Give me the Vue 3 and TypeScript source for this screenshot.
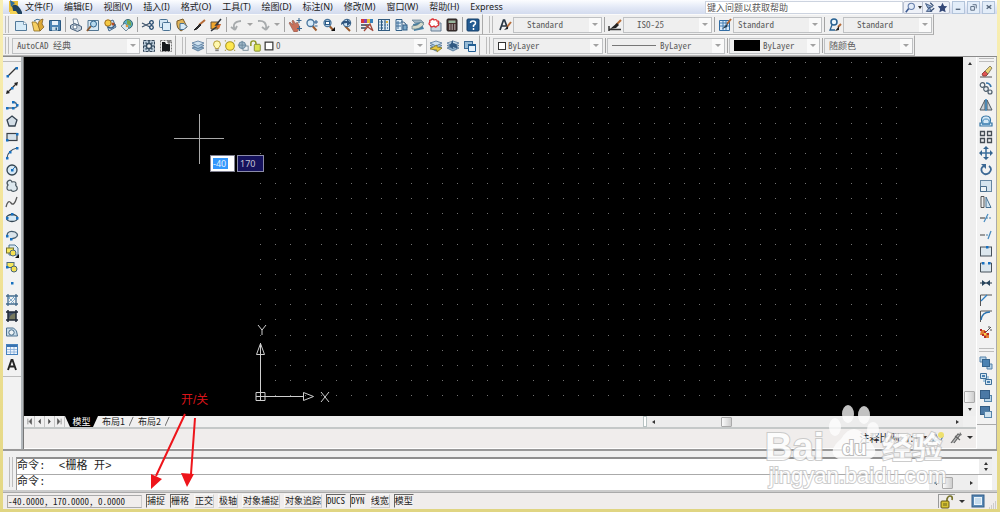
<script setup lang="ts">
import { ref } from 'vue'

type Item =
  | { kind: 'icon'; name: string; label: string }
  | { kind: 'sep' }
  | { kind: 'drop'; label: string }
  | { kind: 'combo'; size: string; text: string; label: string; prefix?: string; indent?: boolean }

const icon = (name: string, label: string): Item => ({ kind: 'icon', name, label })
const sep: Item = { kind: 'sep' }
const drop = (label: string): Item => ({ kind: 'drop', label })

const lens = '<path d="M7.500 8l4 4.500" stroke="#9a5a2c" stroke-width="2"/><circle cx="5.500" cy="5" r="3.500" fill="#d8ecfa" stroke="#47739b" stroke-width="1.300"/>'
const layerStack = '<path d="M1 9l6-2 6 2-6 3z" fill="#8fb0ca" stroke="#43698e" stroke-width=".7"/><path d="M1 6.500l6-2 6 2-6 3z" fill="#aecbe2" stroke="#43698e" stroke-width=".7"/><path d="M1 4l6-2 6 2-6 3z" fill="#cfe2f0" stroke="#43698e" stroke-width=".7"/>'
const nodes = (pts: number[][]) => pts.map(([x, y]) => `<rect x="${x - 1}" y="${y - 1}" width="2.500" height="2.500" fill="#1670c0"/>`).join('')

const icons: Record<string, string> = {
  app: '<rect x="1" y="1" width="9" height="11" fill="#e8bd38"/><path d="M2 0l5 3-4 4z" fill="#2c6c9d"/><path d="M4 6q5-4 10 6v2H6z" fill="#1f4260"/><path d="M2 11h6l2 3H2z" fill="#f4d254"/>',
  new: '<path d="M1.500 3.500h8l3 2.500v6.500h-11z" fill="#d7ebf8" stroke="#527999"/><path d="M9.500 3.500v3h3" fill="#fff" stroke="#527999" stroke-width=".7"/>',
  open: '<path d="M1 4h4l1 2h5l-2 7H3z" fill="#f6cf63" stroke="#8b6c25" stroke-width=".8"/><path d="M7 7q0-5 5-6l-1 5 2 3-4 4z" fill="#dca836" stroke="#75531c" stroke-width=".7"/><path d="M3 3q3-3 6-1" fill="none" stroke="#3d6e91"/>',
  save: '<path d="M1.500 2.500h11v10h-11z" fill="#4e85b5" stroke="#285780"/><rect x="4" y="3" width="6" height="4" fill="#e7f1fa"/><rect x="4" y="9" width="6" height="3.500" fill="#c7ddeb"/><rect x="7.500" y="9.500" width="1.500" height="2.500" fill="#315f87"/>',
  print: '<path d="M4 1h4l2 6H5z" fill="#f5f8fb" stroke="#5b7189" stroke-width=".8"/><path d="M1.500 7.500l4-2 7 3v3l-4 2-7-3z" fill="#c4d0dc" stroke="#465e78"/><circle cx="6" cy="9" r="2" fill="#fff" stroke="#465e78" stroke-width=".8"/>',
  preview: '<path d="M2 2.500h10.500v10H2z" fill="#d7e8f4" stroke="#527692"/><path d="M5 8l-4 5" stroke="#8d5b32" stroke-width="2"/><circle cx="7.500" cy="6" r="3" fill="#b6d9ee" stroke="#2e638e"/>',
  publish: '<path d="M3 5l7-3 3 7-7 4z" fill="#c8deee" stroke="#45688a"/><circle cx="5" cy="5" r="3.200" fill="#f6c943" stroke="#9e6c19"/><path d="M5 9q5 3 7-3" fill="none" stroke="#365c85" stroke-width="1.500"/><circle cx="10" cy="6" r="1.500" fill="#b55028"/>',
  globe: '<circle cx="8" cy="6" r="4.500" fill="#56b1cc" stroke="#37666e"/><path d="M7 2q5 0 4 6l-4-2z" fill="#78a54a"/><path d="M1 8l4-3 4 5-3 3z" fill="#dbe8ef" stroke="#567184" stroke-width=".8"/><circle cx="7" cy="8" r="1.300" fill="#e99938"/>',
  cut: '<path d="M1 5l8 4M1 9l8-4" stroke="#40556b" stroke-width="1.300"/><circle cx="10.500" cy="4.500" r="1.800" fill="none" stroke="#20466c" stroke-width="1.300"/><circle cx="10.500" cy="9.500" r="1.800" fill="none" stroke="#20466c" stroke-width="1.300"/>',
  copy: '<rect x="1.500" y="1.500" width="8" height="8" rx="1" fill="#d5e8f5" stroke="#4a7395"/><rect x="4.500" y="4.500" width="8" height="8" rx="1" fill="#dbedf9" stroke="#4a7395"/>',
  paste: '<path d="M2 3l6-2 4 8-6 4q-5-3-4-10z" fill="#e1b456" stroke="#785b2c"/><path d="M5 5.500h4l3 3-3 3H5z" fill="#d6eaf8" stroke="#4a7395"/>',
  brush: '<path d="M13 2L7 7" stroke="#b56a35" stroke-width="2"/><path d="M8 6l-6 6 3-1 4-4z" fill="#333" stroke="#222"/>',
  blockedit: '<path d="M2 4h7v7H2z" fill="#f0a62c" stroke="#66553f"/><path d="M12 1L7 7h3l-8 6" fill="none" stroke="#2f353e" stroke-width="1.500"/><path d="M7 8l5-2-2 5z" fill="#e46f28"/>',
  undo: '<path d="M5 12Q1 4 11 3M5 12l-4-3M5 12l2-4" fill="none" stroke="#a7abad" stroke-width="1.800"/>',
  redo: '<path d="M1 3q9-1 8 8M9 12L5 9M9 12l3-4" fill="none" stroke="#a7abad" stroke-width="1.800"/>',
  pan: '<path d="M1 5l1-1 3 3-1-4 1-1 3 4 1-2 2 3v4l-2 3H6z" fill="#c7705b" stroke="#8d5d50" stroke-width=".6"/><path d="M11 0v5M8.500 2.500h5M11.500 8v5M9 10.500h5" stroke="#3a6790" stroke-width="1.100"/>',
  zoomrt: lens + '<path d="M11 2v4M9 4h4M9.500 8h3" stroke="#2b5f91"/>',
  zoomwin: lens + '<rect x="3.500" y="3.500" width="4" height="3" fill="#fff" stroke="#2b5b86"/><path d="M13 9v4H9z" fill="#111"/>',
  zoomprev: '<path d="M6 8l5 5" stroke="#9a5a2c" stroke-width="2"/><circle cx="8" cy="5" r="3.800" fill="#d2e7f8" stroke="#315d86"/><path d="M2 7q0-5 6-4V1l4 4-4 3V5Q4 5 2 7z" fill="#2f547e"/>',
  props: '<path d="M1 1h3v4H1z" fill="#d93737"/><path d="M4 1h3v4H4z" fill="#8342ac"/><path d="M7 1h3v4H7z" fill="#e6bd32"/><path d="M10 1h3v4h-3z" fill="#3581bb"/><path d="M1 7h8M1 10h5" stroke="#61717d" stroke-width="2"/><path d="M4 13l6-7 3 7M5 7l7 5" fill="none" stroke="#a1473a" stroke-width="1.300"/>',
  center: '<rect x="1.500" y="1.500" width="11" height="11" fill="#dceaf4" stroke="#305b80"/><path d="M4.500 1v12M8 1v12" stroke="#305b80"/><path d="M2.500 4h9.500M2.500 7h9.500M2.500 10h9.500" stroke="#3f6f95" stroke-dasharray="1 1.500" stroke-width="1.500"/><rect x="9" y="3" width="2" height="2" fill="#e0b642"/>',
  palette: '<path d="M2 1.500h6v11H2z" fill="#dfedf7" stroke="#315f87"/><path d="M4 3v8M2 5h5M2 8h5" stroke="#3e6f9a"/><path d="M7 4q5-1 6 6" fill="none" stroke="#315d83"/><rect x="9" y="7" width="4" height="5" fill="#7aa7c7" stroke="#315f87"/>',
  sheets: '<path d="M1 2h9l3 3H4z" fill="#9eb6c4" stroke="#637d8d" stroke-width=".7"/><path d="M2 6l8-2 3 7-10 2z" fill="#487fa2"/><path d="M1 8q6 0 9-4l3 2q-4 6-12 5z" fill="#d4d9ca" stroke="#5e7c87" stroke-width=".7"/>',
  markup: '<path d="M5 5h8v8H3V9z" fill="#c9d6e1" stroke="#667f95"/><path d="M3 2q2-2 3 0 3-1 3 1 3 0 1 2 2 2-1 3-1 2-3 0-3 2-4-1-2-1 0-3-1-2 1-2z" fill="#fff" stroke="#dc3237" stroke-width="1.300"/>',
  calc: '<rect x="2" y="1" width="10" height="12" rx="1" fill="#47312f" stroke="#222"/><rect x="3.500" y="2.500" width="7" height="2.500" fill="#98b69d"/><path d="M4 7h7M4 9h7M4 11h7" stroke="#ddd" stroke-dasharray="1.500 1" stroke-width="1.200"/>',
  help: '<rect x="1" y="1" width="12" height="12" rx="1" fill="#235b92" stroke="#153f68"/><path d="M4.500 5q0-2 2.500-2t2.500 2q0 1.500-2 2.500v1.500M7.500 10v2" fill="none" stroke="#fff" stroke-width="1.500"/>',
  textstyle: '<path d="M2 12L5.500 2h1l3 8M3 8h5" fill="none" stroke="#273542" stroke-width="1.700"/><path d="M13 4L9 9" stroke="#b56b37" stroke-width="2"/><path d="M10 8l-4 4 4-1z" fill="#222"/>',
  dimstyle: '<path d="M1 11.500h12M1 8v5" stroke="#333" stroke-width="1.500"/><path d="M13 2L8 7" stroke="#b56b37" stroke-width="2"/><path d="M9 5l-7 6 6-1 3-3z" fill="#222"/>',
  tablestyle: '<path d="M1.500 2.500h10v10h-10z" fill="#dceafa" stroke="#326da4"/><path d="M2 5h9M2 8h9M5 3v9M8 3v9" stroke="#447fb4"/><path d="M13 1L9 6" stroke="#b56b37" stroke-width="2"/><path d="M10 5l-6 6 5-2z" fill="#263c50"/>',
  leader: '<circle cx="6" cy="4" r="3" fill="#eef8fd" stroke="#286191" stroke-width="1.500"/><path d="M4 7L2 12h5" fill="none" stroke="#286191" stroke-width="1.300"/><path d="M13 6l-3 3" stroke="#b56b37" stroke-width="2"/><path d="M11 8l-4 5 4-1z" fill="#222"/>',
  gear: '<rect x="1.500" y="1.500" width="11" height="11" fill="#b8c9d8" stroke="#34475b" stroke-dasharray="3 1"/><path d="M7 2v10M2 7h10M3.500 3.500l7 7M10.500 3.500l-7 7" stroke="#4e6475" stroke-width="1.700"/><circle cx="7" cy="7" r="2.500" fill="#eee" stroke="#334b61" stroke-width="1.300"/>',
  workspace: '<rect x="1.500" y="1.500" width="11" height="11" fill="none" stroke="#777" stroke-dasharray="2 1"/><path d="M3 3h3l1 2h4v7H3z" fill="#171a1d"/><path d="M10 1v5M8 3h4" stroke="#555"/>',
  layers: layerStack,
  bulb: '<path d="M7 1q4 0 4 4 0 2-2 4v1H5V9Q3 7 3 5q0-4 4-4z" fill="#fff8ae" stroke="#a78d27"/><path d="M5 11h4v2H5z" fill="#818181"/>',
  sun: '<circle cx="7" cy="7" r="5" fill="#ffe84f" stroke="#a99624" stroke-width="1.300"/><path d="M1 1h1M12 1h1M1 12h1M12 12h1" stroke="#9e8b1e" stroke-width="1.500"/>',
  freeze: '<rect x="7" y="7" width="6" height="5" fill="#eef2f5" stroke="#6d8290"/><circle cx="6" cy="6" r="4" fill="#9fb7c7" stroke="#61829b"/><path d="M6 1v10M1 6h10" stroke="#69869b"/>',
  openlock: '<path d="M1 7V4q0-3 3-3t3 3v3" fill="none" stroke="#8e951e" stroke-width="1.700"/><rect x="5" y="5" width="7" height="8" rx="1" fill="#dce34d" stroke="#79802b"/>',
  box: '<rect x="2.500" y="2.500" width="9" height="9" fill="#fff" stroke="#343434" stroke-width="1.400"/>',
  makelayer: layerStack + '<path d="M1 10l7-4v2l5 1-5 4v-2z" fill="#e7c63f" stroke="#83751f" stroke-width=".7"/>',
  prevlayer: layerStack + '<path d="M3 7l4-6v3q5 0 4 6Q10 8 7 8v2z" fill="#315982"/>',
  layerstate: '<rect x="1.500" y="2.500" width="8" height="7" fill="#96bad5" stroke="#3a6994"/><path d="M5.500 5.500h7v7h-7z" fill="#e6f1fa" stroke="#225e93"/><path d="M5 6h8" stroke="#225e93" stroke-width="2"/>',
  line: '<path d="M3 11l8-8" stroke="#333" stroke-width="1.200"/>' + nodes([[2.5, 11], [11.5, 3]]),
  xline: '<path d="M3 11l8-8" stroke="#333" stroke-width="1.200"/><path d="M1 13l1-4 3 3zM13 1L9 2l3 3z" fill="#222"/>' + nodes([[7, 7]]),
  pline: '<path d="M2 10h7q4-1 3-3-1-3-4-3" fill="none" stroke="#566f88" stroke-width="1.300"/>' + nodes([[2, 10], [8, 10], [8, 4], [12, 7]]),
  polygon: '<path d="M7 2l5 4-2 6H4L2 6z" fill="#d3dee7" stroke="#33414f" stroke-width="1.300"/>',
  rect: '<rect x="2" y="3.500" width="10" height="7" fill="#d6e1e9" stroke="#3a4149" stroke-width="1.200"/>' + nodes([[2, 10], [12, 4]]),
  arc: '<path d="M2 12Q3 4 12 2" fill="none" stroke="#374d61" stroke-width="1.200"/>' + nodes([[2, 12], [5, 6], [12, 2]]),
  circle: '<circle cx="7" cy="7" r="5" fill="#d7e8f4" stroke="#334552" stroke-width="1.300"/><path d="M7 7l3-3" stroke="#2876b8"/>' + nodes([[7, 7]]),
  cloud: '<path d="M3 2q3-2 4 1 4-1 4 2-1 1 1 3 1 3-2 4-3 1-4-1-4 1-4-2 0-2 1-3Q1 4 3 2z" fill="#dde8ee" stroke="#46545d" stroke-width="1.200"/>',
  spline: '<path d="M1 12Q3 4 6 8t6-6" fill="none" stroke="#555" stroke-width="1.300"/>',
  ellipse: '<ellipse cx="7" cy="7" rx="5.500" ry="3.500" fill="#d7e8f4" stroke="#334552" stroke-width="1.300"/>' + nodes([[2, 7], [7, 3], [12, 7]]),
  ellarc: '<path d="M2 7q1-5 8-3 5 3 0 6l-4 1" fill="#dae4eb" stroke="#455d70" stroke-width="1.300"/>' + nodes([[2, 8], [6, 11]]),
  insert: '<path d="M4 1h6l3 3v7H4z" fill="#dceaf4" stroke="#4c7492"/><rect x="1.500" y="4" width="7" height="5" fill="#f5e75d" stroke="#77722d"/><circle cx="8" cy="9" r="3" fill="#f5df51" stroke="#4e697a"/><path d="M14 10v4h-4z" fill="#111"/>',
  block: '<rect x="2" y="2.500" width="7" height="5" fill="#f5e75d" stroke="#506b78"/><circle cx="9" cy="9" r="3" fill="#f5df51" stroke="#456473"/>' + nodes([[2, 7]]),
  point: nodes([[7, 7]]),
  hatch: '<path d="M3 1v12M11 1v12M1 3h12M1 11h12" stroke="#42698a" stroke-width="1.300"/><path d="M3 6l3-3M3 10l7-7M5 11l6-6M3 4l7 7M7 3l4 4" stroke="#6a9ac0" stroke-width=".8"/>',
  gradient: '<path d="M3 3h8v8H3z" fill="#425069"/><path d="M4 11q0-6 7-7v7z" fill="#77795d"/><path d="M3 1v12M11 1v12M1 3h12M1 11h12" stroke="#202a38" stroke-width="1.500"/>',
  region: '<path d="M1.500 3h7q4 2 4 8h-11z" fill="#c9ddec" stroke="#4f7391"/><circle cx="6.500" cy="7.500" r="2.700" fill="#eef3f6" stroke="#466b88"/>',
  table: '<rect x="1.500" y="2.500" width="11" height="10" fill="#eff5fc" stroke="#4681bd"/><path d="M2 4h10" stroke="#3872b0" stroke-width="2"/><path d="M2 7.500h10M2 10h10M5.500 5v7M9 5v7" stroke="#86acd8" stroke-width=".8"/>',
  mtext: '<path d="M3 12L6.500 2h1L11 12M4.500 8.500h5" fill="none" stroke="#222" stroke-width="1.900"/>',
  erase: '<path d="M1 12h12" stroke="#555"/><path d="M3 9l3-3 3 3-2 2H4z" fill="#df5351" stroke="#93443f"/><path d="M6 6l5-5 2 2-4 6z" fill="#e9d477" stroke="#665f4b" stroke-width=".7"/>',
  copyobj: '<circle cx="3.500" cy="4" r="2.300" fill="#eff3f6" stroke="#4e5e6c" stroke-width="1.200"/><circle cx="7" cy="8" r="2.300" fill="#e8eef3" stroke="#4e5e6c" stroke-width="1.200"/><circle cx="11" cy="11" r="2" fill="#e8eef3" stroke="#4e5e6c" stroke-width="1.200"/><path d="M7 2q4 0 5 4" fill="none" stroke="#3975aa" stroke-width="1.700"/>',
  mirror: '<path d="M6 2v10H1zM8 2v10h5z" fill="#c9d0d5" stroke="#4f5961"/><path d="M7 1v12" stroke="#287bb6" stroke-width="1.400"/>',
  offset: '<path d="M1 12h12V9h-2q2-7-4-7T3 9H1z" fill="#d5e9f7" stroke="#3474a3" stroke-width="1.200"/><path d="M4 9q-1-4 3-4t3 4" fill="none" stroke="#4388b7"/><path d="M3 10h8" stroke="#2870a6" stroke-width="1.400"/>',
  array: '<path d="M1.500 1.500h4v4h-4zM8.500 1.500h4v4h-4zM1.500 8.500h4v4h-4zM8.500 8.500h4v4h-4z" fill="#eee" stroke="#454d54" stroke-width="1.300"/>',
  move: '<path d="M7 2v10M2 7h10" stroke="#3d709d" stroke-width="1.600"/><path d="M7 0l3 3H4zM7 14l-3-3h6zM0 7l3-3v6zM14 7l-3 3V4z" fill="#356590"/>',
  rotate: '<path d="M5 3Q1 5 3 9q3 4 7 1 4-4 0-7" fill="none" stroke="#3c6894" stroke-width="1.800"/><path d="M2 1h5v5z" fill="#3c6894"/>',
  scale: '<rect x="1.500" y="1.500" width="11" height="11" fill="#d5e4ee" stroke="#6686a1"/><path d="M1.500 7.500h6v5h-6z" fill="#edf3f6" stroke="#4a6d8b"/>',
  stretch: '<path d="M2 1.500h3v11H2z" fill="#eee" stroke="#555"/><path d="M7 2l5 10.500H7z" fill="#d4e5f1" stroke="#477294"/>',
  trim: '<path d="M5 11l4-8" stroke="#4a8cc1" stroke-width="1.300"/><path d="M1 7h5" stroke="#333"/><path d="M7 7h6" stroke="#4b83ad" stroke-dasharray="2 1"/>',
  extend: '<path d="M9 11l3-8" stroke="#4a8cc1" stroke-width="1.300"/><path d="M1 7h5" stroke="#444"/><path d="M7 7h4" stroke="#4d83ac" stroke-dasharray="2 1"/>',
  breakpt: '<rect x="1.500" y="3" width="11" height="9" fill="#dce7ee" stroke="#46515a"/>' + nodes([[8, 3]]),
  break: '<path d="M4 3H1.500v9h11V3H10" fill="#dce7ee" stroke="#46515a"/>' + nodes([[4, 3], [10, 3]]),
  join: '<path d="M1 7h12" stroke="#283b4b"/><path d="M3 4l4 3-4 3zM11 4L7 7l4 3z" fill="#28445d"/>',
  chamfer: '<path d="M1.500 13V2H13" fill="none" stroke="#555"/><path d="M2 8l6-6" stroke="#2d7fc5" stroke-width="1.300"/>',
  fillet: '<path d="M1.500 13V2H13" fill="none" stroke="#555"/><path d="M2 11Q3 3 11 3" fill="none" stroke="#2871af" stroke-width="1.500"/>',
  explode: '<path d="M2 5h4v3h4v5H5v-3H1z" fill="#e27d33"/><path d="M1 5h2M5 7h2M3 10h2M8 9h2M5 12h2" stroke="#b72b29" stroke-width="2"/><path d="M7 7l5-5M9 2h2M12 4v2" stroke="#555"/><circle cx="6" cy="9" r="1" fill="#fff056"/>',
  front: '<path d="M1 1h6v5H1zM8 8h5v5H8z" fill="#b7d2e7" stroke="#5482aa"/><rect x="3.500" y="3.500" width="7" height="7" fill="#4b82b2" stroke="#34648d"/>',
  back: '<rect x="4" y="4" width="6" height="6" fill="#a9c9df"/><path d="M1.500 1.500h6v5h-6zM6.500 7.500h6v5h-6z" fill="#d4e5f1" stroke="#3f709a"/><path d="M3 3h3v2H3zM8 9h3v2H8z" fill="#4b82b2"/>',
  above: '<rect x="5.500" y="6.500" width="7" height="6" fill="#b9d4e7" stroke="#5685ab"/><rect x="1.500" y="1.500" width="9" height="8" fill="#4b79a5" stroke="#345d84"/>',
  under: '<rect x="1.500" y="1.500" width="9" height="8" fill="#4b79a5" stroke="#345d84"/><rect x="5.500" y="6.500" width="7" height="6" fill="#cfe2ef" stroke="#5685ab"/>',
  search: '<path d="M5 8l-4 5" stroke="#38578f" stroke-width="2"/><circle cx="8" cy="5.500" r="4" fill="#e3ecf9" stroke="#667eab" stroke-width="1.400"/>',
  comm: '<path d="M2 2l9 4-6 2zM3 12l4-5 3 5z" fill="#91a9cc" stroke="#334b73"/><path d="M8 1l4 4M8 12l5-4" stroke="#334b73" stroke-width="1.500"/>',
  star: '<path d="M7 1l2 4 4 .5-3 3 1 4.500-4-2-4 2 1-4.500-3-3L5 5z" fill="#344777"/>',
  annovis: '<path d="M1 12l4-8 4 8M4 9h6l2-4" fill="none" stroke="#608aac" stroke-width="1.300"/><circle cx="10" cy="4" r="3" fill="#eee06d"/>',
  annoauto: '<path d="M2 12L9 3l2 1-6 8M6 5l5 4" fill="#bbb" stroke="#666" stroke-width="1.200"/><path d="M11 1l-1 4 3-1z" fill="#777"/>',
  lock: '<path d="M7 7V4q1-3 3-3 3 0 2 4" fill="none" stroke="#777329" stroke-width="1.700"/><rect x="1" y="6" width="8" height="7" rx="1" fill="#d7c333" stroke="#665814"/><path d="M4 8v3M6 8v3" stroke="#69601b"/>',
  clean: '<rect x="1" y="1" width="12" height="12" fill="#5a89b5" stroke="#315d88"/><rect x="3.500" y="3.500" width="7" height="7" fill="#c6dced" stroke="#eaf3fa"/>',
}

const menus = ['文件(F)', '编辑(E)', '视图(V)', '插入(I)', '格式(O)', '工具(T)', '绘图(D)', '标注(N)', '修改(M)', '窗口(W)', '帮助(H)', 'Express']

const rows: { items: Item[] }[][] = [
  [
    {
      items: [
        icon('new', '新建'), icon('open', '打开'), icon('save', '保存'), sep,
        icon('print', '打印'), icon('preview', '打印预览'), icon('publish', '发布'), icon('globe', '三维 DWF'), sep,
        icon('cut', '剪切'), icon('copy', '复制'), icon('paste', '粘贴'), icon('brush', '特性匹配'), icon('blockedit', '块编辑器'), sep,
        icon('undo', '放弃'), drop('放弃列表'), icon('redo', '重做'), drop('重做列表'), sep,
        icon('pan', '平移'), icon('zoomrt', '实时缩放'), icon('zoomwin', '窗口缩放'), icon('zoomprev', '缩放上一个'), sep,
        icon('props', '特性'), icon('center', '设计中心'), icon('palette', '工具选项板'), icon('sheets', '图纸集'), icon('markup', '标记集'), icon('calc', '计算器'), sep,
        icon('help', '帮助'),
      ],
    },
    {
      items: [
        icon('textstyle', '文字样式'), { kind: 'combo', size: 'w89', text: 'Standard', label: '文字样式', indent: true }, sep,
        icon('dimstyle', '标注样式'), { kind: 'combo', size: 'w89', text: 'ISO-25', label: '标注样式', indent: true }, sep,
        icon('tablestyle', '表格样式'), { kind: 'combo', size: 'w89', text: 'Standard', label: '表格样式' }, sep,
        icon('leader', '多重引线样式'), { kind: 'combo', size: 'w89', text: 'Standard', label: '多重引线样式', indent: true },
      ],
    },
  ],
  [
    {
      items: [
        { kind: 'combo', size: 'w128', text: 'AutoCAD 经典', label: '工作空间' },
        icon('gear', '工作空间设置'), icon('workspace', '我的工作空间'),
      ],
    },
    {
      items: [
        icon('layers', '图层特性'), { kind: 'combo', size: 'w221', text: '0', label: '图层', prefix: 'layer' },
        icon('makelayer', '置为当前图层'), icon('prevlayer', '上一个图层'), icon('layerstate', '图层状态'),
      ],
    },
    {
      items: [
        { kind: 'combo', size: 'w110', text: 'ByLayer', label: '颜色', prefix: 'swatch' }, sep,
        { kind: 'combo', size: 'w118', text: 'ByLayer', label: '线型', prefix: 'rule' }, sep,
        { kind: 'combo', size: 'w91', text: 'ByLayer', label: '线宽', prefix: 'black' }, sep,
        { kind: 'combo', size: 'w89', text: '随颜色', label: '打印样式' },
      ],
    },
  ],
]

const drawTools = [
  ['line', '直线'], ['xline', '构造线'], ['pline', '多段线'], ['polygon', '正多边形'], ['rect', '矩形'], ['arc', '圆弧'], ['circle', '圆'],
  ['cloud', '修订云线'], ['spline', '样条曲线'], ['ellipse', '椭圆'], ['ellarc', '椭圆弧'], ['insert', '插入块'], ['block', '创建块'],
  ['point', '点'], ['hatch', '图案填充'], ['gradient', '渐变色'], ['region', '面域'], ['table', '表格'], ['mtext', '多行文字'],
]
const modifyTools = [
  ['erase', '删除'], ['copyobj', '复制对象'], ['mirror', '镜像'], ['offset', '偏移'], ['array', '阵列'], ['move', '移动'], ['rotate', '旋转'],
  ['scale', '缩放'], ['stretch', '拉伸'], ['trim', '修剪'], ['extend', '延伸'], ['breakpt', '打断于点'], ['break', '打断'], ['join', '合并'],
  ['chamfer', '倒角'], ['fillet', '圆角'], ['explode', '分解'],
]
const orderTools = [['front', '前置'], ['back', '后置'], ['above', '置于对象之上'], ['under', '置于对象之下']]

const modes = ref([
  { text: '捕捉', on: true }, { text: '栅格', on: true }, { text: '正交', on: false }, { text: '极轴', on: false },
  { text: '对象捕捉', on: false }, { text: '对象追踪', on: false }, { text: 'DUCS', on: true }, { text: 'DYN', on: true },
  { text: '线宽', on: false }, { text: '模型', on: true },
])

// Grid spacing in drawing units is not a whole number of screen pixels.
const spacing = 15.145
let dots = ''
for (let r = 0; r < 23; r++) {
  for (let c = 0; c < 43; c++) {
    dots += `M${236 + Math.round(c * spacing)} ${5.5 + Math.round(r * spacing)}h1`
  }
}

const question = ref('键入问题以获取帮助')
const dynX = ref('-40')
const dynY = ref('170')
const command = ref('命令:')
</script>

<template>
  <div class="window">
    <header class="menubar">
      <svg class="ic" viewBox="0 0 14 14" aria-hidden="true" v-html="icons.app" />
      <nav class="menus">
        <button v-for="m in menus" :key="m" type="button">{{ m }}</button>
      </nav>
      <input v-model="question" class="question" aria-label="帮助搜索">
      <div class="info">
        <button type="button" aria-label="搜索"><svg class="ic small" viewBox="0 0 14 14" v-html="icons.search" /></button>
        <button type="button" class="tiny" aria-label="搜索选项"><i class="caret dark" /></button>
        <button type="button" aria-label="通讯中心"><svg class="ic small" viewBox="0 0 14 14" v-html="icons.comm" /></button>
        <button type="button" aria-label="收藏夹"><svg class="ic small" viewBox="0 0 14 14" v-html="icons.star" /></button>
      </div>
      <div class="winbtns">
        <button type="button" aria-label="最小化"><svg viewBox="0 0 12 12"><path d="M3 8.500h5" stroke="#56677d" stroke-width="1.500" /></svg></button>
        <button type="button" aria-label="还原"><svg viewBox="0 0 12 12"><path d="M5 3.500h4v4M3 5.500h4v4H3z" fill="none" stroke="#56677d" /></svg></button>
        <button type="button" aria-label="关闭"><svg viewBox="0 0 12 12"><path d="M4 4l5 4M9 4L4 8" stroke="#56677d" stroke-width="1.500" /></svg></button>
      </div>
    </header>

    <div v-for="(row, ri) in rows" :key="ri" class="toolrow">
      <div v-for="(group, gi) in row" :key="gi" class="group">
        <span class="grip" />
        <template v-for="(it, i) in group.items" :key="i">
          <button v-if="it.kind === 'icon'" type="button" class="tool" :aria-label="it.label">
            <svg class="ic" viewBox="0 0 14 14" v-html="icons[it.name]" />
          </button>
          <span v-else-if="it.kind === 'sep'" class="sep" />
          <button v-else-if="it.kind === 'drop'" type="button" class="dropbtn" :aria-label="it.label"><i class="caret" /></button>
          <label v-else class="combo" :class="[it.size, { indent: it.indent }]">
            <template v-if="it.prefix === 'layer'">
              <svg v-for="n in ['bulb', 'sun', 'freeze', 'openlock', 'box']" :key="n" class="ic layer" viewBox="0 0 14 14" v-html="icons[n]" />
            </template>
            <span v-else-if="it.prefix" :class="it.prefix" />
            <select :aria-label="it.label"><option>{{ it.text }}</option></select>
            <span class="arrow"><i class="caret" /></span>
          </label>
        </template>
      </div>
    </div>

    <div class="body">
      <aside class="side left">
        <div class="toolcol draw">
          <button v-for="t in drawTools" :key="t[0]" type="button" :aria-label="t[1]"><svg class="ic" viewBox="0 0 14 14" v-html="icons[t[0]]" /></button>
        </div>
      </aside>

      <main class="center">
        <div class="viewrow">
          <div class="canvas">
            <svg class="drawing" width="940" height="358" fill="none">
              <path :d="dots" stroke="#747474" />
              <path d="M150 81.500h50M175.500 57v50" stroke="#a9a9a9" />
              <g stroke="#cfcfcf">
                <path d="M236.500 335v-49M241 339.500h38M232 335.500h9v8h-9zM232 339.500h9M236.500 335v8" />
                <path d="M232.500 297.500l4-11 4 11zM279.500 335.500l10 4-10 4z" />
                <path d="M234 268l4 5 4-5M238 273v5M297 335l8 10M305 335l-8 10" />
              </g>
            </svg>
            <input v-model="dynX" class="dyn active" aria-label="X 坐标">
            <input v-model="dynY" class="dyn second" aria-label="Y 坐标">
          </div>
          <div class="vscroll">
            <button type="button" aria-label="向上滚动"><i class="caret dark up" /></button>
            <span class="space" />
            <span class="thumb" />
            <button type="button" aria-label="向下滚动"><i class="caret dark" /></button>
          </div>
        </div>
        <div class="tabs">
          <button type="button" class="nav" aria-label="第一个"><svg viewBox="0 0 11 11"><path d="M3.500 2v7M8 2L5 5.500 8 9z" fill="#555" stroke="#555" stroke-width=".7" /></svg></button>
          <button type="button" class="nav" aria-label="上一个"><svg viewBox="0 0 11 11"><path d="M7 2L4 5.500 7 9z" fill="#444" /></svg></button>
          <button type="button" class="nav" aria-label="下一个"><svg viewBox="0 0 11 11"><path d="M4 2l3 3.500L4 9z" fill="#444" /></svg></button>
          <button type="button" class="nav" aria-label="最后一个"><svg viewBox="0 0 11 11"><path d="M7.500 2v7M3 2l3 3.500L3 9z" fill="#555" stroke="#555" stroke-width=".7" /></svg></button>
          <button type="button" class="tab current">模型</button>
          <button type="button" class="tab">布局1</button>
          <svg class="slash" viewBox="0 0 6 11"><path d="M0 11L5 0" stroke="#555" /></svg>
          <button type="button" class="tab">布局2</button>
          <svg class="slash" viewBox="0 0 6 11"><path d="M0 11L5 0" stroke="#555" /></svg>
          <span class="space" />
          <div class="hscroll">
            <span class="split" />
            <button type="button" aria-label="向左滚动"><i class="caret dark lft" /></button>
            <span class="gap" />
            <span class="thumb" />
            <span class="space" />
            <button type="button" aria-label="向右滚动"><i class="caret dark rgt" /></button>
          </div>
        </div>
        <div class="anno">
          <span>注释比例: 1:1</span><i class="caret dark" />
          <button type="button" aria-label="注释可见性"><svg class="ic" viewBox="0 0 14 14" v-html="icons.annovis" /></button>
          <button type="button" aria-label="自动缩放"><svg class="ic" viewBox="0 0 14 14" v-html="icons.annoauto" /></button>
          <i class="caret dark big" />
        </div>
      </main>

      <aside class="side right">
        <span class="hgrip" />
        <div class="toolcol modify">
          <button v-for="t in modifyTools" :key="t[0]" type="button" :aria-label="t[1]"><svg class="ic" viewBox="0 0 14 14" v-html="icons[t[0]]" /></button>
        </div>
        <span class="hgrip next" />
        <div class="toolcol order">
          <button v-for="t in orderTools" :key="t[0]" type="button" :aria-label="t[1]"><svg class="ic" viewBox="0 0 14 14" v-html="icons[t[0]]" /></button>
        </div>
      </aside>
    </div>

    <section class="command">
      <span class="grip" />
      <div class="console">
        <div class="line">
          <span class="log">命令:&nbsp; &lt;栅格 开&gt;</span>
          <span class="steps"><i class="caret dark up" /><i class="caret dark" /></span>
        </div>
        <div class="line entry">
          <input v-model="command" aria-label="命令行">
          <span class="hs"><i class="caret dark lft" /><span class="thumb" /><i class="caret dark rgt" /></span>
        </div>
      </div>
    </section>

    <footer class="status">
      <output class="coords">-40.0000, 170.0000, 0.0000</output>
      <button v-for="m in modes" :key="m.text" type="button" class="mode" :class="{ on: m.on }" :aria-pressed="m.on" @click="m.on = !m.on">{{ m.text }}</button>
      <span class="space" />
      <button type="button" class="lockbtn" aria-label="锁定"><svg class="ic" viewBox="0 0 14 14" v-html="icons.lock" /></button>
      <i class="caret dark big" />
      <button type="button" class="clean" aria-label="全屏显示"><svg class="ic" viewBox="0 0 14 14" v-html="icons.clean" /></button>
      <svg class="resize" viewBox="0 0 8 8"><path d="M6 1h1M4 3h3M2 5h5M0 7h7" stroke="#aaa" stroke-dasharray="1 1" /></svg>
    </footer>

    <svg class="callout" width="80" height="110" aria-hidden="true">
      <path d="M45 19L16 81M55 23L51 79" stroke="#ee151b" stroke-width="2" />
      <path d="M11 94l0-15 11 5zM47 92l-6-14 13 1z" fill="#ee151b" />
      <text x="41" y="9" font-size="12" fill="#d8141a">开/关</text>
    </svg>

    <svg class="watermark" width="190" height="100" aria-hidden="true">
      <g class="paw">
        <ellipse cx="86" cy="10" rx="6" ry="9" />
        <ellipse cx="102" cy="11" rx="6" ry="9" />
        <ellipse cx="73" cy="23" rx="6" ry="9" />
        <ellipse cx="111" cy="26" rx="6" ry="8" />
        <path d="M92 25q7 0 13 10 10 8 8 15-3 8-21 6-18 2-21-6-2-7 8-15 6-10 13-10z" />
      </g>
      <g class="mark">
        <text x="3" y="56" font-size="38" font-weight="bold">Bai</text>
        <text x="120" y="54" font-size="30" font-weight="bold">经验</text>
        <text x="7" y="79" font-size="22">jingyan.baidu.com</text>
      </g>
      <text class="du" x="80" y="51" font-size="20" font-weight="bold">du</text>
    </svg>
  </div>
</template>

<style>
body { margin: 0; background: #e3d888; }
</style>

<style scoped>
.window {
  position: relative;
  box-sizing: border-box;
  min-height: 100vh;
  padding: 0 3px;
  border-bottom: 3px solid #e0d582;
  background: linear-gradient(#f8efb5, #f4e59b 40%, #e3d784);
  display: flex;
  flex-direction: column;
  overflow: hidden;
  font: 9px/12px "Noto Sans", "Noto Sans CJK SC", sans-serif;
  color: #1c1c1c;
}
button, input, select {
  font: inherit;
  color: inherit;
  margin: 0;
  padding: 0;
  border: 0;
  background: none;
  border-radius: 0;
  white-space: nowrap;
}
button { display: flex; align-items: center; justify-content: center; flex: none; }
.ic { width: 14px; height: 14px; flex: none; display: block; }
.ic.small { width: 11px; height: 11px; }
.space { flex: 1; }
.caret {
  width: 0;
  height: 0;
  flex: none;
  border: 3px solid transparent;
  border-top-color: #a2a2a2;
  border-bottom-width: 0;
}
.caret.dark { border-width: 2px; border-top: 3px solid #333; border-bottom: 0; }
.caret.up { border-top: 0; border-bottom: 3px solid #333; }
.caret.lft { border: 2px solid transparent; border-right: 3px solid #333; border-left: 0; }
.caret.rgt { border: 2px solid transparent; border-left: 3px solid #333; border-right: 0; }
.caret.big { border-width: 3px; border-bottom: 0; }

.menubar {
  height: 14px;
  display: flex;
  align-items: center;
  padding-left: 5px;
  background: linear-gradient(#fcfdff, #e2e8f6 55%, #d3dbee);
}
.menubar .ic { margin-right: 3px; }
.menus { display: flex; gap: 11px; flex: 1; }
.question {
  box-sizing: border-box;
  width: 198px;
  height: 13px;
  padding-left: 1px;
  background: #fff;
  border: 1px solid #ccd3df;
  color: #555;
}
.info { display: flex; height: 13px; background: #eef1f8; border: 1px solid #b9c0cf; box-sizing: border-box; border-radius: 2px; }
.info button { width: 13px; }
.menubar .info .ic { margin: 0; }
.info .tiny { width: 6px; border-right: 1px solid #b9c0cf; }
.winbtns { display: flex; gap: 2px; margin: 0 2px; }
.winbtns button { width: 13px; height: 13px; box-sizing: border-box; border: 1px solid #b3c4da; background: #e3edf9; }
.winbtns svg { width: 12px; height: 12px; }

.toolrow { height: 21px; display: flex; background: #f0f0f0; }
.group {
  display: flex;
  align-items: center;
  padding: 0 1px 0 2px;
  border-right: 1px solid #aaa;
  border-bottom: 1px solid #b4b4b4;
  border-top: 1px solid #fafafa;
}
.group + .group { padding-left: 6px; }
.grip {
  width: 2px;
  height: 17px;
  margin-right: 3px;
  flex: none;
  border: solid #bdbdbd;
  border-width: 0 1px;
}
.tool { width: 17px; height: 17px; }
.dropbtn { width: 10px; height: 17px; }
.sep { width: 3px; height: 15px; flex: none; box-sizing: border-box; border-right: 1px solid #a3a3a3; margin-right: 1px; }
.combo {
  box-sizing: border-box;
  height: 16px;
  flex: none;
  display: flex;
  align-items: center;
  padding-left: 4px;
  border: 1px solid #bfc1c3;
  background: #efefef;
  color: #5c5c5c;
}
.combo.indent { padding-left: 13px; }
.combo select {
  appearance: none;
  flex: 1;
  min-width: 0;
  font: 9px/12px "Noto Sans CJK SC", sans-serif;
  font-feature-settings: "hwid";
}
.arrow { width: 12px; height: 14px; background: #fafafa; display: flex; align-items: center; justify-content: center; }
.arrow .caret { border-width: 3px; border-bottom: 0; }
.w89 { width: 89px; }
.w91 { width: 91px; }
.w110 { width: 110px; }
.w118 { width: 118px; }
.w128 { width: 128px; }
.w221 { width: 221px; }
.layer { width: 12px; height: 12px; margin-right: 1px; }
.swatch { width: 6px; height: 6px; border: 1px solid #333; background: #fff; margin-right: 2px; }
.rule { width: 44px; height: 1px; background: #777; margin-right: 4px; }
.black { width: 26px; height: 11px; background: #000; margin-right: 3px; }

.body { flex: 1; display: flex; border-top: 1px solid #8a8a8a; background: #f0f0f0; }
.side { flex: none; display: flex; flex-direction: column; background: #f2f2f2; }
.left { width: 18px; border-right: 2px solid #b2b7bb; }
.right { width: 19px; border-left: 1px solid #fff; border-right: 1px solid #aaa; }
.toolcol { display: flex; flex-direction: column; justify-content: space-between; }
.toolcol button { width: 18px; height: 16px; }
.draw { height: 309px; margin-top: 4px; padding: 2px 0 3px; border: solid #bdbdbd; border-width: 1px 0; }
.modify { height: 276px; }
.order { height: 65px; padding-bottom: 4px; border-bottom: 1px solid #aaa; }
.hgrip { height: 2px; margin: 1px 2px 2px; border: solid #bdbdbd; border-width: 1px 0; }
.hgrip.next { margin: 8px 2px 3px; }

.center { flex: 1; min-width: 0; display: flex; flex-direction: column; border-left: 1px solid #777; }
.viewrow { flex: 1; display: flex; }
.canvas { position: relative; flex: 1; min-width: 0; overflow: hidden; background: #000; }
.drawing { position: absolute; left: 0; top: 0; }
.dyn {
  position: absolute;
  box-sizing: border-box;
  top: 98px;
  left: 186px;
  width: 25px;
  height: 17px;
  padding-left: 2px;
  border: 1px solid #808090;
  background: linear-gradient(#3297fd, #3297fd) 2px 2px / 15px 11px no-repeat #fff;
  color: #e6f3ff;
  font: 9px/15px "Noto Sans", sans-serif;
}
.dyn.second { left: 213px; width: 27px; background: #15125c; border-color: #8b8ba8; color: #c4c4d4; }
.vscroll { width: 13px; display: flex; flex-direction: column; align-items: center; background: #eee; }
.vscroll button { width: 13px; height: 13px; }
.thumb { box-sizing: border-box; width: 11px; height: 12px; flex: none; border: 1px solid #aaa; border-radius: 1px; background: linear-gradient(90deg, #fafafa, #cecece); }
.tabs { height: 11px; display: flex; align-items: stretch; background: #f0f0f0; border-bottom: 2px solid #c4c8c8; }
.nav { width: 10px; border-right: 1px solid #c5c5c5; }
.nav svg { width: 11px; height: 11px; }
.nav:first-child { margin-left: 1px; }
.tab { padding: 0 4px; font-family: "Noto Sans CJK SC", sans-serif; line-height: 11px; }
.tab.current { width: 33px; background: #000; color: #fff; clip-path: polygon(0 0, 100% 0, 28px 100%, 5px 100%); }
.slash { width: 5px; height: 11px; }
.hscroll { width: 320px; display: flex; align-items: center; margin-right: 13px; background: #ececec; }
.hscroll button { width: 12px; height: 11px; }
.hscroll .thumb { height: 10px; }
.split { width: 2px; height: 9px; border: 1px solid #b9c4c4; background: #fff; }
.gap { width: 62px; }
.anno { height: 17px; display: flex; align-items: center; justify-content: flex-end; gap: 4px; padding: 0 3px 2px; background: #f0edec; border-bottom: 1px solid #fff; }
.anno span { font-size: 10px; }

.command {
  display: flex;
  padding: 6px 5px 0 6px;
  border-top: 2px solid #999;
  background: #f0f0f0;
  border-bottom: 2px solid #ccc;
}
.command .grip { height: 30px; margin-right: 3px; }
.console { flex: 1; border-top: 2px solid #8f8f8f; border-left: 1px solid #999; background: #fff; font: 11px/15px "Liberation Mono", "Noto Sans CJK SC", monospace; }
.line { height: 15px; display: flex; align-items: center; border-bottom: 1px solid #aaa; }
.log { flex: 1; white-space: nowrap; }
.entry { border-bottom: 0; }
.entry input { flex: 1; min-width: 0; height: 15px; }
.steps { width: 13px; align-self: stretch; background: #eee; display: flex; flex-direction: column; align-items: center; justify-content: space-evenly; }
.hs { width: 49px; height: 15px; margin-right: 14px; background: #eee; display: flex; align-items: center; justify-content: space-between; padding: 0 5px; box-sizing: border-box; }
.hs .thumb { margin-right: 12px; }

.status { height: 16px; display: flex; align-items: center; gap: 4px; padding-left: 4px; background: #f0edec; border-top: 1px solid #aaa; font-family: "Noto Sans CJK SC", sans-serif; font-feature-settings: "hwid"; }
.coords { box-sizing: border-box; width: 135px; height: 13px; line-height: 11px; border: 1px solid #aaa; border-right-color: #ccc; }
.mode { height: 14px; border: 1px solid #f8f8f8; border-right-color: #ccc; border-bottom-color: #ccc; line-height: 12px; box-sizing: border-box; }
.mode.on { border-color: #666 #eee #eee #666; background: #f3f1f0; }
.lockbtn { width: 17px; height: 14px; border-top: 1px solid #999; border-left: 1px solid #999; box-sizing: border-box; }
.clean { margin-left: 2px; }
.resize { width: 8px; height: 8px; align-self: flex-end; }

.callout { position: absolute; left: 140px; bottom: 4px; overflow: visible; pointer-events: none; }
.callout text { font-family: "Liberation Sans", "Noto Sans CJK SC", sans-serif; }
.watermark { position: absolute; right: 48px; bottom: 5px; overflow: visible; pointer-events: none; font-family: "Liberation Sans", "Noto Sans CJK SC", sans-serif; }
.paw { fill: #fff; opacity: 0.76; }
.mark { fill: #fff; stroke: #c4c4c4; stroke-width: 2px; paint-order: stroke; opacity: 0.85; }
.du { fill: #fff; stroke: #bbb; stroke-width: 2px; paint-order: stroke; }
</style>
